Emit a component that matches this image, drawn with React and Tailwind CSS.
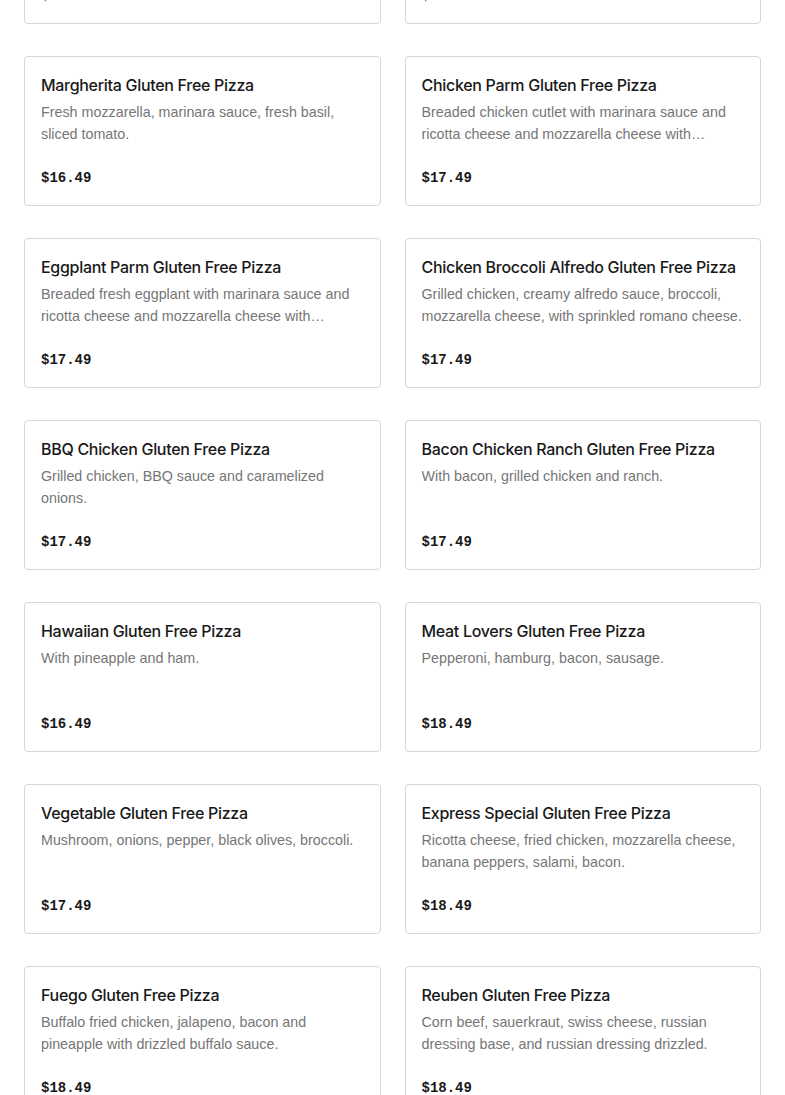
import React from 'react';

// Gluten free pizza items, in display order (two per row)
const ITEMS = [
  { name: 'Cheese Gluten Free Pizza', desc: 'Classic cheese pizza with marinara sauce and mozzarella cheese.', price: '$15.49' },
  { name: 'Pepperoni Gluten Free Pizza', desc: 'Marinara sauce, mozzarella cheese and pepperoni.', price: '$17.49' },
  { name: 'Margherita Gluten Free Pizza', desc: 'Fresh mozzarella, marinara sauce, fresh basil, sliced tomato.', price: '$16.49' },
  { name: 'Chicken Parm Gluten Free Pizza', desc: 'Breaded chicken cutlet with marinara sauce and ricotta cheese and mozzarella cheese with sprinkled romano cheese.', price: '$17.49' },
  { name: 'Eggplant Parm Gluten Free Pizza', desc: 'Breaded fresh eggplant with marinara sauce and ricotta cheese and mozzarella cheese with sprinkled romano cheese.', price: '$17.49' },
  { name: 'Chicken Broccoli Alfredo Gluten Free Pizza', desc: 'Grilled chicken, creamy alfredo sauce, broccoli, mozzarella cheese, with sprinkled romano cheese.', price: '$17.49' },
  { name: 'BBQ Chicken Gluten Free Pizza', desc: 'Grilled chicken, BBQ sauce and caramelized onions.', price: '$17.49' },
  { name: 'Bacon Chicken Ranch Gluten Free Pizza', desc: 'With bacon, grilled chicken and ranch.', price: '$17.49' },
  { name: 'Hawaiian Gluten Free Pizza', desc: 'With pineapple and ham.', price: '$16.49' },
  { name: 'Meat Lovers Gluten Free Pizza', desc: 'Pepperoni, hamburg, bacon, sausage.', price: '$18.49' },
  { name: 'Vegetable Gluten Free Pizza', desc: 'Mushroom, onions, pepper, black olives, broccoli.', price: '$17.49' },
  { name: 'Express Special Gluten Free Pizza', desc: 'Ricotta cheese, fried chicken, mozzarella cheese, banana peppers, salami, bacon.', price: '$18.49' },
  { name: 'Fuego Gluten Free Pizza', desc: 'Buffalo fried chicken, jalapeno, bacon and pineapple with drizzled buffalo sauce.', price: '$18.49' },
  { name: 'Reuben Gluten Free Pizza', desc: 'Corn beef, sauerkraut, swiss cheese, russian dressing base, and russian dressing drizzled.', price: '$18.49' },
];

const ItemCard = ({ item }) => (
  <div className="h-[150px] flex flex-col border border-[#d6d6d6] rounded-[4px] px-4 pt-4 pb-[15px] bg-white">
    <div className="text-[16px] leading-6 font-medium tracking-[-0.3px] text-[#191919] truncate" style={{ fontFamily: 'Inter, "Liberation Sans", sans-serif' }}>
      {item.name}
    </div>
    <div className="mt-1 text-[14.3px] leading-[22px] text-[#767676] line-clamp-2" style={{ fontFamily: '"Liberation Sans", Arial, sans-serif' }}>
      {item.desc}
    </div>
    <div className="mt-auto text-[14px] leading-6 font-bold text-[#191919]" style={{ fontFamily: '"Liberation Mono", monospace' }}>
      {item.price}
    </div>
  </div>
);

export default function App() {
  return (
    <div className="bg-white min-h-screen overflow-hidden">
      <div className="-mt-[126px] px-6 grid grid-cols-2 gap-x-6 gap-y-8">
        {ITEMS.map((item) => (
          <ItemCard key={item.name} item={item} />
        ))}
      </div>
    </div>
  );
}
